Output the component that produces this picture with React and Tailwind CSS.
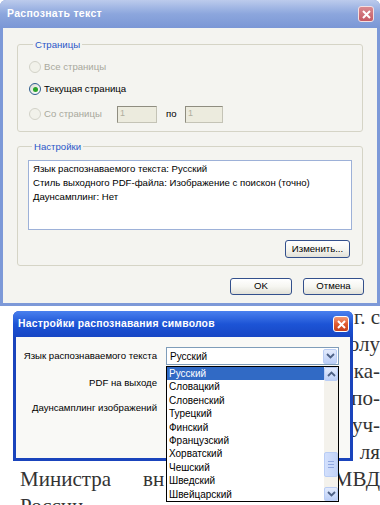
import React from 'react';

function Radio({ checked, disabled }) {
  return (
    <span
      className={
        disabled
          ? 'flex h-[12px] w-[12px] shrink-0 items-center justify-center rounded-full border border-[#d2d2c8] bg-[#f1f1ea]'
          : 'flex h-[12px] w-[12px] shrink-0 items-center justify-center rounded-full border border-[#2f5d8e] bg-gradient-to-br from-[#dcdcd4] to-white'
      }
    >
      {checked && <span className="h-[5px] w-[5px] rounded-full bg-[#2aa42a]" />}
    </span>
  );
}

function Btn({ children, className }) {
  return (
    <div
      className={`flex items-center justify-center rounded-[3px] border border-[#33508c] bg-gradient-to-b from-white via-[#f6f6f1] to-[#e2e1d8] text-[9.6px] text-black ${className}`}
    >
      {children}
    </div>
  );
}

function Chevron({ up }) {
  return (
    <svg width="9" height="6" viewBox="0 0 9 6">
      <path
        d={up ? 'M1 5 L4.5 1.5 L8 5' : 'M1 1 L4.5 4.5 L8 1'}
        fill="none"
        stroke="#4d6185"
        strokeWidth="1.8"
      />
    </svg>
  );
}

function CloseBox({ faded }) {
  return (
    <div
      className={
        faded
          ? 'flex h-[16px] w-[16px] items-center justify-center rounded-[3px] border border-[#f4dfe1] bg-gradient-to-b from-[#d98a90] to-[#c55a64]'
          : 'flex h-[16px] w-[16px] items-center justify-center rounded-[3px] border border-white bg-gradient-to-b from-[#f09a78] via-[#e05a2e] to-[#c4401c]'
      }
    >
      <svg width="9" height="9" viewBox="0 0 9 9">
        <path d="M1 1 L8 8 M8 1 L1 8" stroke="white" strokeWidth="2" />
      </svg>
    </div>
  );
}

const languages = [
  'Русский',
  'Словацкий',
  'Словенский',
  'Турецкий',
  'Финский',
  'Французский',
  'Хорватский',
  'Чешский',
  'Шведский',
  'Швейцарский',
];

// only the ends of the page lines stick out from under the dialog
const lineEnds = ['г. с', 'олу', 'ка-', 'по-', 'уч-', 'ля'];

export default function App() {
  return (
    <div className="relative h-[505px] w-[380px] overflow-hidden bg-white font-['Liberation_Sans',Arial,sans-serif]">
      {/* main dialog */}
      <div className="relative z-10 flex h-[306px] w-[380px] flex-col overflow-hidden rounded-t-[6px] bg-[#7d99d8]">
        <div className="flex h-[28px] shrink-0 items-center justify-between bg-gradient-to-b from-[#bccbec] via-[#8ca6dd] to-[#7b97d6] pl-[7px] pr-[6px]">
          <span className="text-[10.5px] font-bold tracking-[0.3px] text-white">Распознать текст</span>
          <CloseBox faded />
        </div>
        <div className="mx-[3px] mb-[3px] flex flex-1 flex-col bg-[#f4f4f0]">
          <fieldset className="mx-[14px] mt-[10px] h-[94px] rounded-[3px] border border-[#d5d4c6] pl-[11px] pt-[6px]">
            <legend className="ml-[4px] px-[2px] text-[9.6px] leading-[13px] text-[#2a56c8]">Страницы</legend>
            <div className="flex h-[20px] items-center gap-[3px] text-[9.6px] text-[#a8a89c]">
              <Radio disabled />
              <span>Все страницы</span>
            </div>
            <div className="mt-[2px] flex h-[20px] items-center gap-[3px] text-[9.6px] text-black">
              <Radio checked />
              <span>Текущая страница</span>
            </div>
            <div className="mt-[5px] flex h-[20px] items-center text-[9.6px]">
              <Radio disabled />
              <span className="ml-[3px] w-[73px] shrink-0 whitespace-nowrap text-[#a8a89c]">Со страницы</span>
              <div className="flex h-[17px] w-[40px] items-center border border-[#c4c3b6] border-l-[#8f8d80] border-t-[#8f8d80] bg-[#ecebde] pl-[2px] text-[9px] text-[#b0ae9f]">1</div>
              <span className="ml-[9px] w-[19px] text-black">по</span>
              <div className="flex h-[17px] w-[38px] items-center border border-[#c4c3b6] border-l-[#8f8d80] border-t-[#8f8d80] bg-[#ecebde] pl-[2px] text-[9px] text-[#b0ae9f]">1</div>
            </div>
          </fieldset>

          <fieldset className="mx-[14px] mt-[8px] flex h-[126px] flex-col rounded-[3px] border border-[#d5d4c6] px-[10px] pt-[7px]">
            <legend className="ml-[4px] px-[2px] text-[9.6px] leading-[13px] text-[#2a56c8]">Настройки</legend>
            <div className="h-[70px] border border-[#9db1d8] bg-white pl-[4px] pt-[1px] text-[9.6px] leading-[14px] text-black">
              <div>Язык распознаваемого текста: Русский</div>
              <div>Стиль выходного PDF-файла: Изображение с поискон (точно)</div>
              <div>Даунсамплинг: Нет</div>
            </div>
            <div className="mr-[2px] mt-[10px] flex justify-end">
              <Btn className="h-[18px] w-[65px]">Изменить...</Btn>
            </div>
          </fieldset>

          <div className="mr-[13px] mt-[12px] flex justify-end gap-[11px]">
            <Btn className="h-[17px] w-[62px]">OK</Btn>
            <Btn className="h-[17px] w-[61px]">Отмена</Btn>
          </div>
        </div>
      </div>

      {/* scanned book page behind the second dialog */}
      <div className="-mt-[2px] pl-[20px] text-[21px] leading-[27px] text-[#333] font-['Liberation_Serif','Times_New_Roman',serif]">
        {lineEnds.map((end) => (
          <div key={end} className="flex justify-end whitespace-nowrap">
            {end}
          </div>
        ))}
        <div className="flex whitespace-nowrap">
          <span>Министра</span>
          <span className="ml-[32px]">вн</span>
          <span className="ml-auto">МВД</span>
        </div>
        <div className="whitespace-nowrap">России</div>
      </div>

      {/* recognition settings dialog */}
      <div className="absolute left-[13px] top-[311px] z-20 flex h-[150px] w-[340px] flex-col overflow-hidden rounded-t-[6px] bg-[#1a44bc]">
        <div className="flex h-[26px] shrink-0 items-center justify-between bg-gradient-to-b from-[#4a80ee] via-[#1d54d6] to-[#1746c4] pl-[5px] pr-[4px]">
          <span className="text-[10.4px] font-bold tracking-[0.2px] text-white">Настройки распознавания символов</span>
          <CloseBox />
        </div>
        <div className="mx-[3px] mb-[3px] flex-1 bg-[#f9f9f6] pt-[10px] text-[9.6px] text-black">
          <div className="flex h-[18px] items-center">
            <span className="w-[141px] text-right">Язык распознаваемого текста</span>
            <div className="ml-[9px] flex h-[18px] w-[173px] items-center justify-between border border-[#7f9db9] bg-white pl-[3px] pr-[1px]">
              <span className="text-[10px]">Русский</span>
              <div className="flex h-[15px] w-[14px] items-center justify-center rounded-[2px] border border-[#b9cdf5] bg-gradient-to-b from-[#e3ebfd] to-[#bccff7]">
                <Chevron />
              </div>
            </div>
          </div>
          <div className="mt-[9px] flex h-[18px] items-center">
            <span className="w-[141px] text-right">PDF на выходе</span>
          </div>
          <div className="mt-[7px] flex h-[18px] items-center">
            <span className="w-[141px] text-right">Даунсамплинг изображений</span>
          </div>
        </div>
      </div>

      {/* open drop-down list */}
      <div className="absolute left-[166px] top-[366px] z-30 flex h-[136px] w-[173px] border border-black bg-white">
        <div className="flex-1 text-[10px] leading-[13.4px] text-black">
          {languages.map((lang, i) => (
            <div key={lang} className={i === 0 ? 'bg-[#316ac5] pl-[2px] text-white' : 'pl-[2px]'}>
              {lang}
            </div>
          ))}
        </div>
        <div className="flex w-[14px] flex-col bg-[#f4f2ec]">
          <div className="flex h-[14px] items-center justify-center rounded-[2px] border border-[#b9cdf5] bg-gradient-to-b from-[#e3ebfd] to-[#bccff7]">
            <Chevron up />
          </div>
          <div className="flex-1" />
          <div className="flex h-[25px] flex-col items-center justify-center gap-[2px] rounded-[2px] border border-[#b9cdf5] bg-gradient-to-r from-[#d3e0fc] to-[#c2d3f8]">
            <span className="h-px w-[6px] bg-[#90a8e0]" />
            <span className="h-px w-[6px] bg-[#90a8e0]" />
            <span className="h-px w-[6px] bg-[#90a8e0]" />
          </div>
          <div className="h-[10px]" />
          <div className="flex h-[14px] items-center justify-center rounded-[2px] border border-[#b9cdf5] bg-gradient-to-b from-[#e3ebfd] to-[#bccff7]">
            <Chevron />
          </div>
        </div>
      </div>
    </div>
  );
}
